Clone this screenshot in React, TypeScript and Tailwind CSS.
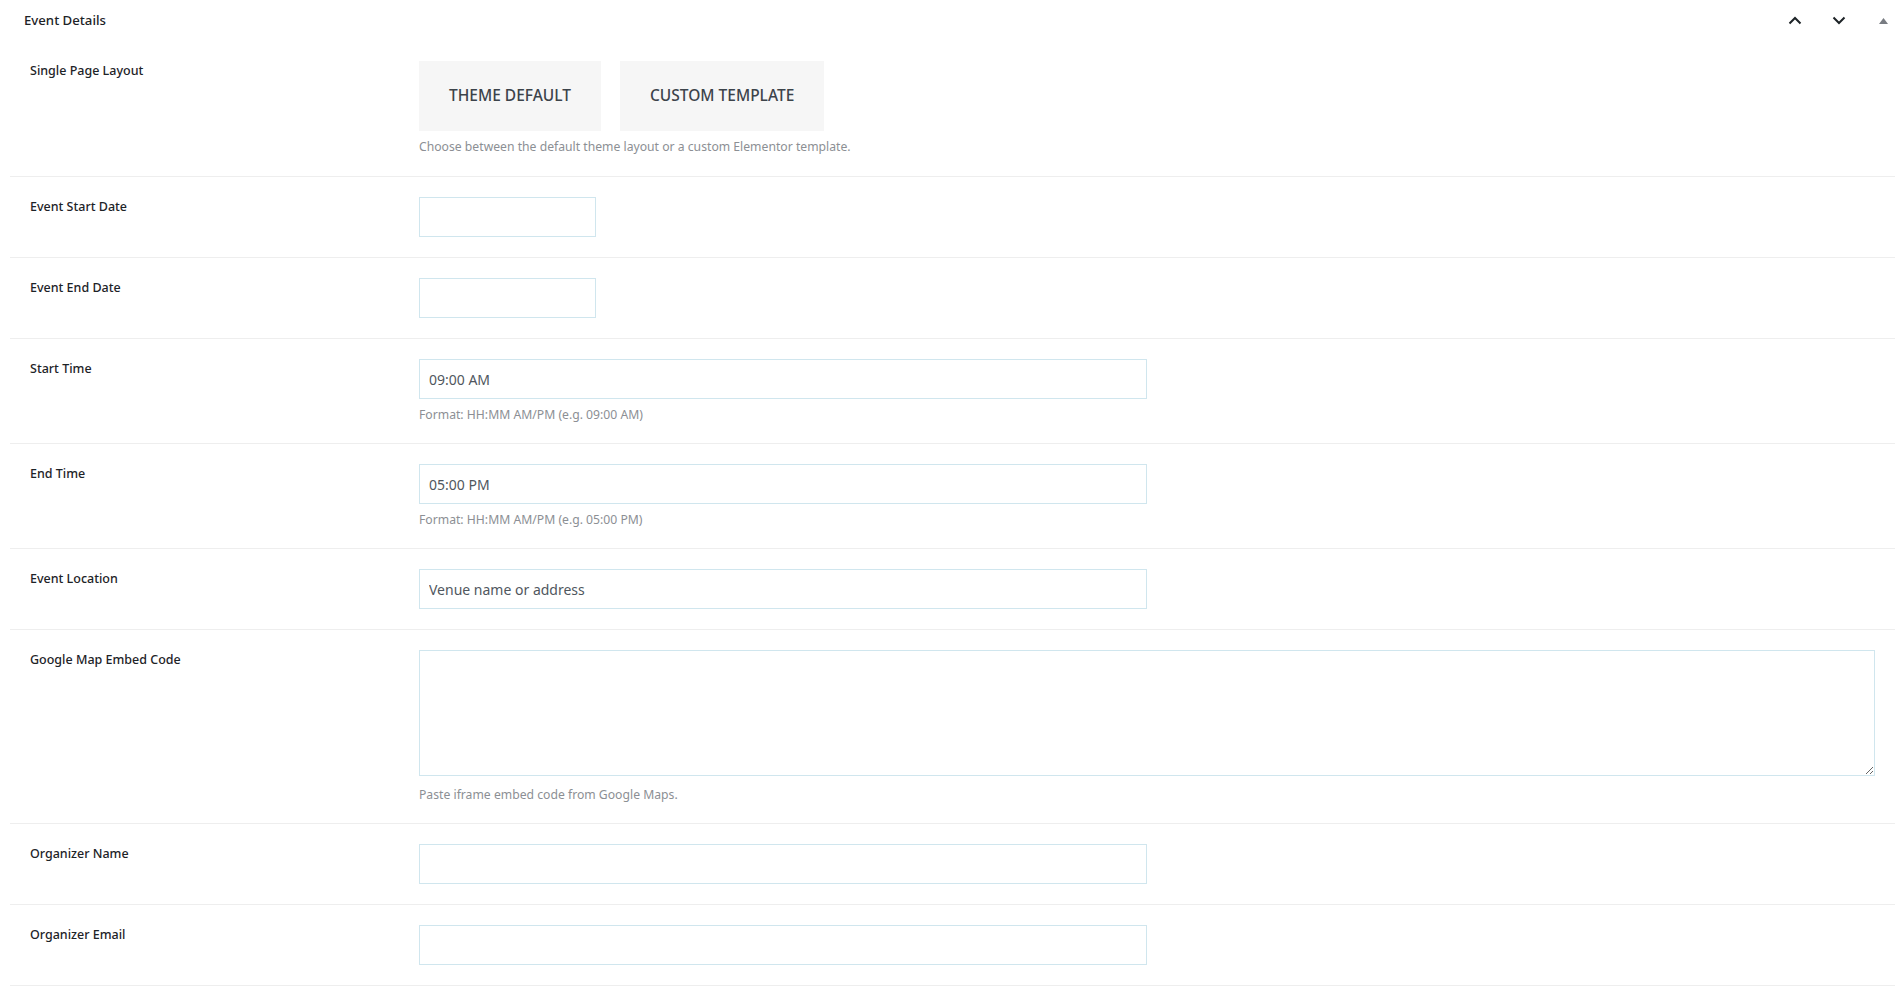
import React from "react";

const font = { fontFamily: '"Noto Sans", "Open Sans", Arial, sans-serif' };

type Field = {
  label: string;
  kind: "short" | "long" | "area";
  value?: string;
  placeholder?: string;
  help?: string;
};

const fields: Field[] = [
  { label: "Event Start Date", kind: "short" },
  { label: "Event End Date", kind: "short" },
  { label: "Start Time", kind: "long", value: "09:00 AM", help: "Format: HH:MM AM/PM (e.g. 09:00 AM)" },
  { label: "End Time", kind: "long", value: "05:00 PM", help: "Format: HH:MM AM/PM (e.g. 05:00 PM)" },
  { label: "Event Location", kind: "long", placeholder: "Venue name or address" },
  { label: "Google Map Embed Code", kind: "area", help: "Paste iframe embed code from Google Maps." },
  { label: "Organizer Name", kind: "long" },
  { label: "Organizer Email", kind: "long" },
];

function Row({ label, children, extra }: { label: string; children: React.ReactNode; extra?: string }) {
  return (
    <div className={`flex border-b border-[#eeeeee] pt-5 ${extra ?? "pb-5"}`}>
      <div className="w-[409px] shrink-0 pl-5 text-[12.5px] leading-[20px] font-medium text-[#1d2327]">{label}</div>
      <div className="flex-1 pr-5">{children}</div>
    </div>
  );
}

function Help({ text, className }: { text: string; className?: string }) {
  return <p className={`${className ?? "mt-2"} text-[12.2px] leading-4 text-[#8c8f94]`}>{text}</p>;
}

export default function App() {
  const inputCls =
    "block h-10 border border-[#d0e6ee] bg-white px-[9px] text-[14px] text-[#50575e] placeholder:text-[#50575e] outline-none";

  return (
    <div className="min-h-screen bg-white" style={font}>
      <div className="flex h-[41px] items-center justify-between pl-6 pr-[2px]">
        <h2 className="text-[13.2px] font-medium text-[#1d2327]">Event Details</h2>
        <div className="flex items-center gap-2">
          <button className="flex h-9 w-9 items-center justify-center text-[#1d2327]">
            <svg width="14" height="9" viewBox="0 0 14 9" fill="none">
              <path d="M1.5 7.5L7 2l5.5 5.5" stroke="currentColor" strokeWidth="2" />
            </svg>
          </button>
          <button className="flex h-9 w-9 items-center justify-center text-[#1d2327]">
            <svg width="14" height="9" viewBox="0 0 14 9" fill="none">
              <path d="M1.5 1.5L7 7l5.5-5.5" stroke="currentColor" strokeWidth="2" />
            </svg>
          </button>
          <button className="flex h-9 w-9 items-center justify-center text-[#787c82]">
            <svg width="9" height="6" viewBox="0 0 9 6">
              <path d="M4.5 0L9 6H0z" fill="currentColor" />
            </svg>
          </button>
        </div>
      </div>

      <div className="ml-[10px] mr-[8px]">
        <Row label="Single Page Layout" extra="pb-[21px]">
          <div className="flex gap-[19px]">
            <button className="h-[70px] bg-[#f6f6f6] px-[30px] text-[15.5px] font-medium text-[#3c434a]">
              THEME DEFAULT
            </button>
            <button className="h-[70px] bg-[#f6f6f6] px-[30px] text-[15.5px] font-medium text-[#3c434a]">
              CUSTOM TEMPLATE
            </button>
          </div>
          <Help text="Choose between the default theme layout or a custom Elementor template." />
        </Row>

        {fields.map((f) => (
          <Row key={f.label} label={f.label}>
            {f.kind === "area" ? (
              <textarea className="block h-[126px] w-full border border-[#d0e6ee] bg-white outline-none" />
            ) : (
              <input
                className={`${inputCls} ${f.kind === "short" ? "w-[177px]" : "w-[728px]"}`}
                defaultValue={f.value}
                placeholder={f.placeholder}
              />
            )}
            {f.help && <Help text={f.help} className={f.kind === "area" ? "mt-[11px]" : "mt-2"} />}
          </Row>
        ))}
      </div>
    </div>
  );
}
